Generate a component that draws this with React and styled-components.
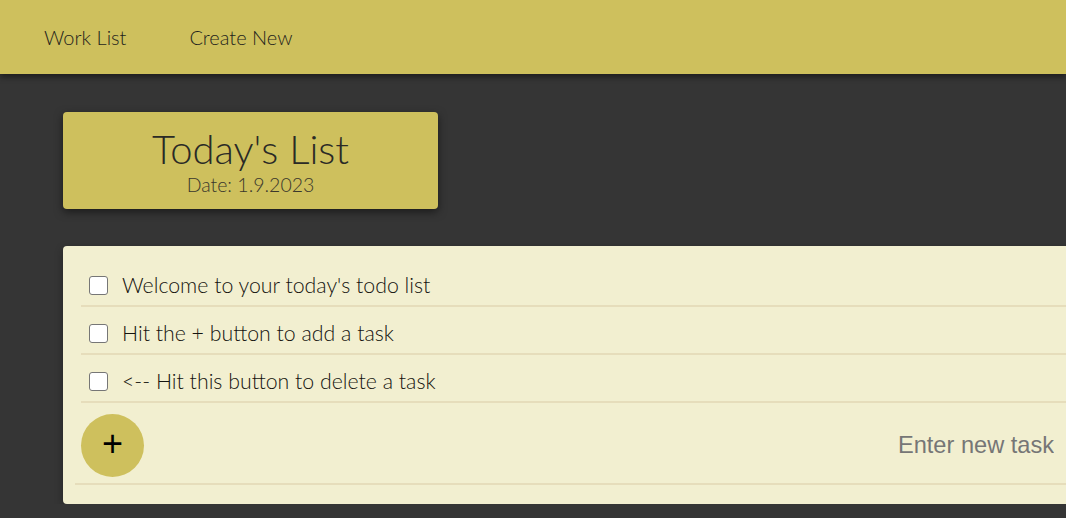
import React, { useState } from 'react';
import styled, { createGlobalStyle } from 'styled-components';

const GlobalStyle = createGlobalStyle`
  html, body {
    margin: 0;
    padding: 0;
    background-color: #353535;
    font-family: Lato, "Noto Sans", sans-serif;
    overflow: hidden;
  }
`;

const initialItems = [
  'Welcome to your today\'s todo list',
  'Hit the + button to add a task',
  '<-- Hit this button to delete a task',
];

export default function App() {
  const [items] = useState(initialItems);
  const [newTask, setNewTask] = useState('');

  return (
    <>
      <GlobalStyle />
      <Navbar>
        <NavLink>Work List</NavLink>
        <NavLink>Create New</NavLink>
      </Navbar>
      <Main>
        <Heading>
          <Title>Today's List</Title>
          <DateLine>Date: 1.9.2023</DateLine>
        </Heading>
        <ListCard>
          {items.map((item, i) => (
            <Item key={i}>
              <Checkbox type="checkbox" />
              <ItemText>{item}</ItemText>
            </Item>
          ))}
          <AddForm onSubmit={e => e.preventDefault()}>
            <AddButton type="submit">+</AddButton>
            <TaskInput
              placeholder="Enter new task"
              value={newTask}
              onChange={e => setNewTask(e.target.value)}
            />
          </AddForm>
        </ListCard>
      </Main>
    </>
  );
}

const Navbar = styled.nav`
  height: 74px;
  background-color: #cec05d;
  display: flex;
  align-items: center;
  padding-left: 44px;
  gap: 63px;
  box-shadow: 0 3px 6px rgba(0, 0, 0, 0.45);
  position: relative;
`;

const NavLink = styled.a`
  font-size: 20px;
  font-weight: 300;
  color: #1f1f1c;
  cursor: pointer;
`;

const Main = styled.main`
  padding: 38px 0 0 63px;
`;

const Heading = styled.div`
  width: 375px;
  height: 97px;
  box-sizing: border-box;
  background-color: #cec05d;
  border-radius: 4px;
  box-shadow: 0 3px 8px rgba(0, 0, 0, 0.5);
  display: flex;
  flex-direction: column;
  align-items: center;
  padding-top: 14px;
`;

const Title = styled.h1`
  margin: 0;
  font-size: 40px;
  font-weight: 300;
  line-height: 46px;
  color: #2a2a26;
`;

const DateLine = styled.p`
  margin: 2px 0 0;
  font-size: 19.5px;
  font-weight: 300;
  line-height: 22px;
  color: #3a372c;
`;

const ListCard = styled.div`
  margin-top: 37px;
  width: 1020px;
  box-sizing: border-box;
  background-color: #f2efd0;
  border-radius: 4px;
  padding: 13px 0 19px 12px;
  box-shadow: 0 3px 8px rgba(0, 0, 0, 0.3);
`;

const Item = styled.div`
  display: flex;
  align-items: center;
  height: 40px;
  padding: 6px 0 0 8px;
  margin-left: 6px;
  border-bottom: 2px solid #e6ddbb;
`;

const Checkbox = styled.input`
  box-sizing: border-box;
  width: 19px;
  height: 19px;
  margin: 0 14px 0 0;
  appearance: none;
  border: 1px solid #767676;
  border-radius: 3px;
  background: #fff;
`;

const ItemText = styled.span`
  font-size: 21.3px;
  font-weight: 300;
  color: #15140f;
`;

const AddForm = styled.form`
  box-sizing: border-box;
  display: flex;
  align-items: center;
  height: 82px;
  padding: 5px 0 0 6px;
  border-bottom: 2px solid #e6ddbb;
`;

const AddButton = styled.button`
  width: 63px;
  height: 63px;
  border-radius: 50%;
  border: none;
  background-color: #cec05d;
  color: #000;
  font-size: 36px;
  font-weight: 400;
  font-family: "Liberation Sans", Arial, sans-serif;
  line-height: 1;
  padding: 0 0 4px;
  flex-shrink: 0;
  cursor: pointer;
`;

const TaskInput = styled.input`
  flex: 1;
  min-width: 0;
  border: none;
  outline: none;
  background: transparent;
  font-family: "Liberation Sans", Arial, sans-serif;
  font-size: 23.6px;
  text-align: right;
  padding: 0 29px 0 0;
  color: #333;

  &::placeholder {
    color: #767676;
  }
`;
